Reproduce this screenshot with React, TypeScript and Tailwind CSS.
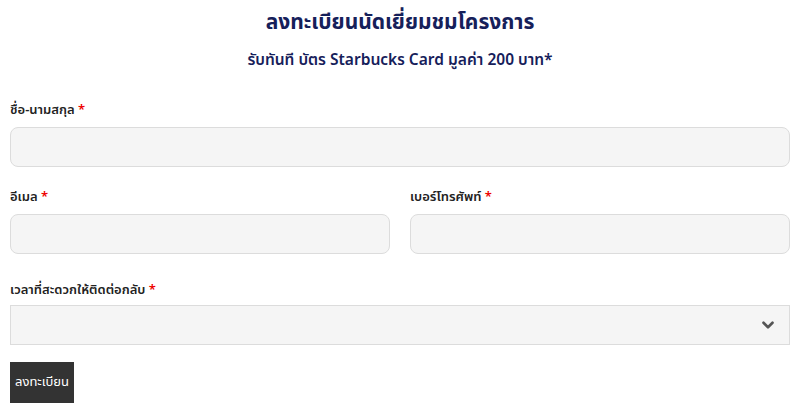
import { ChevronDown } from "lucide-react";

const FONT = "font-['Noto_Sans_Thai','Noto_Sans','Liberation_Sans',sans-serif]";

function Label({ text }: { text: string }) {
  return (
    <label className="block text-[13px] font-semibold leading-[20px] text-[#222]">
      {text} <span className="text-[#e00]">*</span>
    </label>
  );
}

export default function App() {
  return (
    <div className={`${FONT} w-[800px] h-[410px] bg-white px-[10px] pt-[6px] overflow-hidden`}>
      <h1 className="text-center text-[21px] font-bold leading-[34px] text-[#16205a]">
        ลงทะเบียนนัดเยี่ยมชมโครงการ
      </h1>
      <p className="mt-[9px] text-center text-[15.5px] font-semibold leading-[24px] text-[#16205a]">
        รับทันที บัตร Starbucks Card มูลค่า 200 บาท*
      </p>

      <div className="mt-[27px]">
        <Label text="ชื่อ-นามสกุล" />
        <input className="mt-[7px] block h-[40px] w-full rounded-[8px] border border-[#dcdcdc] bg-[#f5f5f5]" />
      </div>

      <div className="mt-[20px] grid grid-cols-2 gap-[20px]">
        <div>
          <Label text="อีเมล" />
          <input className="mt-[7px] block h-[40px] w-full rounded-[8px] border border-[#dcdcdc] bg-[#f5f5f5]" />
        </div>
        <div>
          <Label text="เบอร์โทรศัพท์" />
          <input className="mt-[7px] block h-[40px] w-full rounded-[8px] border border-[#dcdcdc] bg-[#f5f5f5]" />
        </div>
      </div>

      <div className="mt-[26px]">
        <Label text="เวลาที่สะดวกให้ติดต่อกลับ" />
        <div className="relative mt-[5px] h-[40px] w-full border border-[#dcdcdc] bg-[#f5f5f5]">
          <ChevronDown
            size={18}
            strokeWidth={3.5}
            className="absolute right-[12px] top-[10px] text-[#555]"
          />
        </div>
      </div>

      <button className="mt-[17px] h-[41px] w-[64px] bg-[#333] text-[13px] text-white">
        ลงทะเบียน
      </button>
    </div>
  );
}
